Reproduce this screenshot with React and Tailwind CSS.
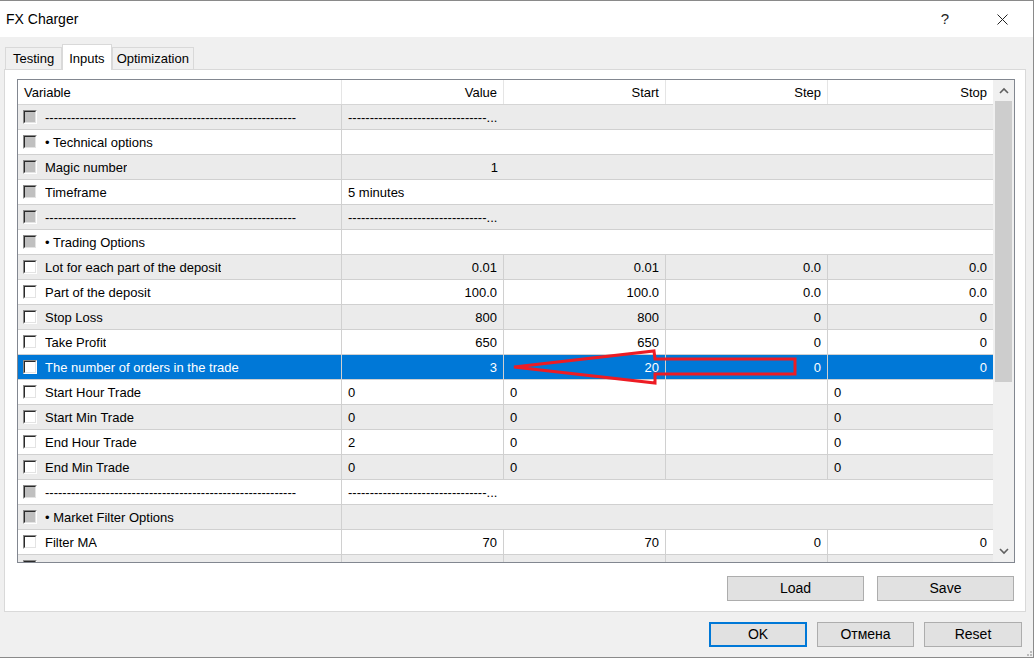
import React from 'react'

const DASH_NAME = '-'.repeat(58)
const DASH_VALUE = '-'.repeat(32) + '...'

const rows = [
  { t: 'dash' },
  { t: 'head', name: 'Technical options' },
  { t: 'single', name: 'Magic number', v: '1', right: true },
  { t: 'single', name: 'Timeframe', v: '5 minutes' },
  { t: 'dash' },
  { t: 'head', name: 'Trading Options' },
  { t: 'full', name: 'Lot for each part of the deposit', v: ['0.01', '0.01', '0.0', '0.0'], right: true },
  { t: 'full', name: 'Part of the deposit', v: ['100.0', '100.0', '0.0', '0.0'], right: true },
  { t: 'full', name: 'Stop Loss', v: ['800', '800', '0', '0'], right: true },
  { t: 'full', name: 'Take Profit', v: ['650', '650', '0', '0'], right: true },
  { t: 'full', name: 'The number of orders in the trade', v: ['3', '20', '0', '0'], right: true, sel: true },
  { t: 'full', name: 'Start Hour Trade', v: ['0', '0', '', '0'] },
  { t: 'full', name: 'Start Min Trade', v: ['0', '0', '', '0'] },
  { t: 'full', name: 'End Hour Trade', v: ['2', '0', '', '0'] },
  { t: 'full', name: 'End Min Trade', v: ['0', '0', '', '0'] },
  { t: 'dash' },
  { t: 'head', name: 'Market Filter Options' },
  { t: 'full', name: 'Filter MA', v: ['70', '70', '0', '0'], right: true },
  { t: 'full', name: '', v: ['', '', '', ''], gray: true },
]

const widths = ['w-[162px]', 'w-[162px]', 'w-[162px]', 'w-[165px]']

function Check({ gray }) {
  return (
    <span className="inline-flex w-[14px] h-[14px] shrink-0 -mt-[2px] border border-t-[#8a8a8a] border-l-[#8a8a8a] border-r-white border-b-white">
      <span
        className={`w-full h-full border border-t-[#2a2a2a] border-l-[#2a2a2a] border-r-[#e3e3e3] border-b-[#e3e3e3] ${
          gray ? 'bg-[#c0c0c0]' : 'bg-white'
        }`}
      />
    </span>
  )
}

function Row({ row, idx }) {
  const bg = row.sel ? 'bg-[#0078d7] text-white' : idx % 2 === 0 ? 'bg-[#ebebeb]' : 'bg-white'
  const grayBox = row.t !== 'full' || row.gray
  let name = row.name
  if (row.t === 'dash') name = DASH_NAME
  if (row.t === 'head') name = '\u2022 ' + row.name

  return (
    <div className={`flex h-[25px] shrink-0 pt-[2px] border-b border-[#d0d0d0] ${bg}`}>
      <div className="w-[324px] flex items-center pl-[5px] border-r border-[#d0d0d0] -mt-[2px] pt-[2px]">
        <Check gray={grayBox} />
        <span className="ml-[8px] whitespace-nowrap overflow-hidden">{name}</span>
      </div>
      {row.t === 'full' ? (
        row.v.map((v, i) => (
          <div
            key={i}
            className={`${widths[i]} flex items-center px-[6px] -mt-[2px] pt-[2px] ${i < 3 ? 'border-r border-[#d0d0d0]' : ''} ${
              row.right ? 'justify-end' : 'justify-start'
            }`}
          >
            {v}
          </div>
        ))
      ) : (
        <div className="flex-1 flex items-center px-[6px]">
          {row.t === 'dash' && <span className="whitespace-nowrap">{DASH_VALUE}</span>}
          {row.t === 'single' && (
            <span className={row.right ? 'w-[150px] text-right' : ''}>{row.v}</span>
          )}
        </div>
      )}
    </div>
  )
}

function Button({ children, primary, className = '' }) {
  return (
    <div
      className={`h-[25px] flex items-center justify-center bg-[#e1e1e1] text-[14px] ${
        primary ? 'border-2 border-[#0078d7]' : 'border border-[#adadad]'
      } ${className}`}
    >
      {children}
    </div>
  )
}

function Chevron({ down }) {
  return (
    <svg width="10" height="7" viewBox="0 0 10 7">
      <polyline
        points={down ? '1,1 5,5 9,1' : '1,6 5,2 9,6'}
        fill="none"
        stroke="#606060"
        strokeWidth="1.6"
      />
    </svg>
  )
}

export default function App() {
  return (
    <div
      className="relative w-[1035px] h-[659px] bg-white overflow-hidden text-[13px] text-black"
      style={{ fontFamily: '"Liberation Sans", Arial, sans-serif' }}
    >
      <div className="w-[1034px] h-[658px] flex flex-col border-t border-r border-b border-[#8a8a8a]">
        {/* title bar */}
        <div className="h-[36px] shrink-0 bg-white flex items-center">
          <span className="pl-[6px] text-[14px] flex-1">FX Charger</span>
          <span className="text-[15px] text-[#222] mr-[48px]">?</span>
          <svg width="11" height="11" viewBox="0 0 11 11" className="mr-[25px]">
            <path d="M0.5 0.5 L10.5 10.5 M10.5 0.5 L0.5 10.5" stroke="#222" strokeWidth="1" />
          </svg>
        </div>

        {/* body */}
        <div className="flex-1 bg-[#f0f0f0] flex flex-col">
          {/* tabs */}
          <div className="h-[32px] flex items-end pl-[5px]">
            <div className="h-[22px] px-[7px] pt-[1px] flex items-center border border-b-0 border-[#d9d9d9] bg-[#f0f0f0]">Testing</div>
            <div className="relative z-10 h-[26px] -mb-px px-[6px] flex items-start pt-[4px] border border-b-0 border-[#d9d9d9] bg-white">
              Inputs
            </div>
            <div className="h-[22px] px-[4px] pt-[1px] flex items-center border border-b-0 border-[#d9d9d9] bg-[#f0f0f0]">Optimization</div>
          </div>

          {/* panel */}
          <div className="ml-[4px] w-[1022px] h-[543px] border border-[#d9d9d9] bg-white pl-[12px] pt-[9px]">
            <div className="w-[998px] h-[484px] border border-[#828790] flex overflow-hidden">
              <div className="w-[975px] flex flex-col overflow-hidden">
                <div className="flex h-[25px] shrink-0 border-b border-[#d5d5d5] bg-white">
                  <div className="w-[324px] flex items-center pl-[6px] pt-[2px] border-r border-[#e5e5e5]">Variable</div>
                  <div className="w-[162px] flex items-center justify-end px-[6px] pt-[2px] border-r border-[#e5e5e5]">Value</div>
                  <div className="w-[162px] flex items-center justify-end px-[6px] pt-[2px] border-r border-[#e5e5e5]">Start</div>
                  <div className="w-[162px] flex items-center justify-end px-[6px] pt-[2px] border-r border-[#e5e5e5]">Step</div>
                  <div className="w-[165px] flex items-center justify-end px-[6px] pt-[2px]">Stop</div>
                </div>
                {rows.map((r, i) => (
                  <Row key={i} row={r} idx={i} />
                ))}
              </div>
              <div className="w-[21px] bg-[#f0f0f0] flex flex-col">
                <div className="h-[21px] flex items-center justify-center">
                  <Chevron />
                </div>
                <div className="mx-[2px] h-[281px] bg-[#cdcdcd]" />
                <div className="flex-1" />
                <div className="h-[21px] flex items-center justify-center">
                  <Chevron down />
                </div>
              </div>
            </div>

            <div className="flex justify-end gap-[13px] mt-[13px] w-[997px]">
              <Button className="w-[137px]">Load</Button>
              <Button className="w-[137px]">Save</Button>
            </div>
          </div>

          {/* dialog buttons */}
          <div className="flex justify-end gap-[10px] mt-[10px] pr-[11px]">
            <Button primary className="w-[98px]">OK</Button>
            <Button className="w-[97px]">Отмена</Button>
            <Button className="w-[98px]">Reset</Button>
          </div>
          <div className="flex-1 flex items-end justify-end pr-[1px] pb-[1px]">
            <div className="grid grid-cols-2 gap-[1px]">
              <span className="w-[2px] h-[2px]" />
              <span className="w-[2px] h-[2px] bg-[#bcbcbc]" />
              <span className="w-[2px] h-[2px] bg-[#bcbcbc]" />
              <span className="w-[2px] h-[2px] bg-[#bcbcbc]" />
            </div>
          </div>
        </div>
      </div>

      {/* red arrow annotation */}
      <svg className="absolute inset-0 pointer-events-none" width="1035" height="659">
        <polygon
          points="514,367 654,351 655,359 795,359 795,374 655,374 655,383"
          fill="none"
          stroke="#ed1c24"
          strokeWidth="3"
          strokeLinejoin="miter"
        />
      </svg>
    </div>
  )
}
